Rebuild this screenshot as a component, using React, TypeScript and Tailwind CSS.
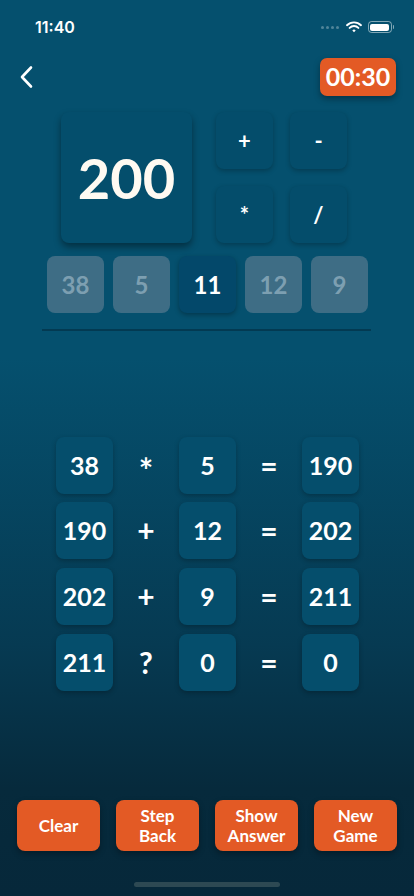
import React from 'react'

const font = { fontFamily: 'Lato, "Noto Sans", sans-serif' }

const ops = ['+', '-', '*', '/']

const numbers = [
  { value: '38', used: true },
  { value: '5', used: true },
  { value: '11', used: false },
  { value: '12', used: true },
  { value: '9', used: true },
]

const steps = [
  ['38', '*', '5', '190'],
  ['190', '+', '12', '202'],
  ['202', '+', '9', '211'],
  ['211', '?', '0', '0'],
]

const actions = [['Clear'], ['Step', 'Back'], ['Show', 'Answer'], ['New', 'Game']]

function StatusBar() {
  return (
    <div className="flex h-[54px] items-center justify-between pl-[35px] pr-[20px]">
      <span className="text-[16px] font-semibold text-white" style={{ fontFamily: 'Inter, sans-serif' }}>11:40</span>
      <div className="flex items-center gap-[6px]">
        <div className="flex gap-[2px] pr-[1px]">
          {[0, 1, 2, 3].map(i => <span key={i} className="h-[3px] w-[3px] rounded-full bg-white/30" />)}
        </div>
        <svg width="16" height="12" viewBox="0 0 16 12">
          <path d="M1 4.2a10 10 0 0 1 14 0" stroke="white" strokeWidth="1.9" fill="none" strokeLinecap="round" />
          <path d="M3.6 6.9a6.2 6.2 0 0 1 8.8 0" stroke="white" strokeWidth="1.9" fill="none" strokeLinecap="round" />
          <path d="M6.3 9.4a2.4 2.4 0 0 1 3.4 0L8 11.2z" fill="white" />
        </svg>
        <div className="flex items-center gap-[1px]">
          <div className="flex h-[12px] w-[24px] items-center rounded-[3.5px] border border-white/50 p-[1.5px]">
            <div className="h-full w-full rounded-[2px] bg-white" />
          </div>
          <div className="h-[4px] w-[1.5px] rounded-r bg-white/50" />
        </div>
      </div>
    </div>
  )
}

export default function App() {
  return (
    <div
      className="flex h-[896px] w-[414px] flex-col overflow-hidden bg-[linear-gradient(to_bottom,#05506e_0%,#05506e_40%,#063a52_72%,#062a3c_88%,#06283a_100%)] text-white"
      style={font}
    >
      <StatusBar />

      <div className="mt-[4px] flex h-[38px] items-center justify-between pl-[18px] pr-[18px]">
        <svg width="18" height="24" viewBox="0 0 18 24">
          <path d="M13 2.5 4 12l9 9.5" stroke="white" strokeWidth="2.6" fill="none" strokeLinecap="round" strokeLinejoin="round" />
        </svg>
        <div className="flex h-[38px] w-[76px] items-center justify-center rounded-[7px] bg-[#e35a25] text-[25px] font-bold shadow-[0_3px_6px_rgba(0,0,0,0.35)]">
          00:30
        </div>
      </div>

      <div className="mt-[16px] flex pl-[61px]">
        <div className="flex h-[131px] w-[131px] items-center justify-center rounded-[8px] bg-[#044e6c] text-[56px] font-bold text-[#fffaf2] shadow-[0_4px_7px_rgba(0,0,0,0.4)]">
          200
        </div>
        <div className="ml-[24px] grid grid-cols-[57px_57px] grid-rows-[57px_57px] gap-x-[17px] gap-y-[17px]">
          {ops.map(op => (
            <div key={op} className="flex items-center justify-center rounded-[8px] bg-[#044d6b] text-[22px] font-bold shadow-[0_2px_5px_rgba(0,0,0,0.25)]">
              {op}
            </div>
          ))}
        </div>
      </div>

      <div className="mt-[13px] flex gap-[9px] pl-[47px]">
        {numbers.map(n => (
          <div
            key={n.value}
            className={n.used
              ? 'flex h-[57px] w-[57px] items-center justify-center rounded-[8px] bg-[#3e6d85] text-[24px] font-bold text-[#7d9fb1]'
              : 'flex h-[57px] w-[57px] items-center justify-center rounded-[8px] bg-[#03486a] text-[24px] font-bold text-white shadow-[0_2px_5px_rgba(0,0,0,0.3)]'}
          >
            {n.value}
          </div>
        ))}
      </div>

      <div className="ml-[42px] mt-[16px] h-[2px] w-[329px] bg-[#033a52]" />

      <div className="ml-[56px] mt-[105px] flex flex-col gap-[9px]">
        {steps.map((row, i) => (
          <div key={i} className="grid h-[57px] grid-cols-[57px_66px_57px_66px_57px] items-center">
            <div className="flex h-[57px] items-center justify-center rounded-[8px] bg-[#054e6c] text-[25px] font-bold shadow-[0_2px_5px_rgba(0,0,0,0.25)]">{row[0]}</div>
            <div className={row[1] === '*' ? 'self-start pt-[8px] text-center text-[34px] font-bold' : 'text-center text-[30px] font-bold'}>{row[1]}</div>
            <div className="flex h-[57px] items-center justify-center rounded-[8px] bg-[#054e6c] text-[25px] font-bold shadow-[0_2px_5px_rgba(0,0,0,0.25)]">{row[2]}</div>
            <div className="text-center text-[30px] font-bold">=</div>
            <div className="flex h-[57px] items-center justify-center rounded-[8px] bg-[#054e6c] text-[25px] font-bold shadow-[0_2px_5px_rgba(0,0,0,0.25)]">{row[3]}</div>
          </div>
        ))}
      </div>

      <div className="flex-1" />

      <div className="flex gap-[16px] pl-[17px]">
        {actions.map(lines => (
          <div key={lines.join(' ')} className="flex h-[51px] w-[83px] flex-col items-center justify-center rounded-[8px] bg-[#e35a25] text-[17px] font-bold leading-[20px] shadow-[0_3px_6px_rgba(0,0,0,0.3)]">
            {lines.map(l => <span key={l}>{l}</span>)}
          </div>
        ))}
      </div>

      <div className="mb-[9px] ml-[134px] mt-[31px] h-[5px] w-[146px] rounded-full bg-[#2d4953]" />
    </div>
  )
}
